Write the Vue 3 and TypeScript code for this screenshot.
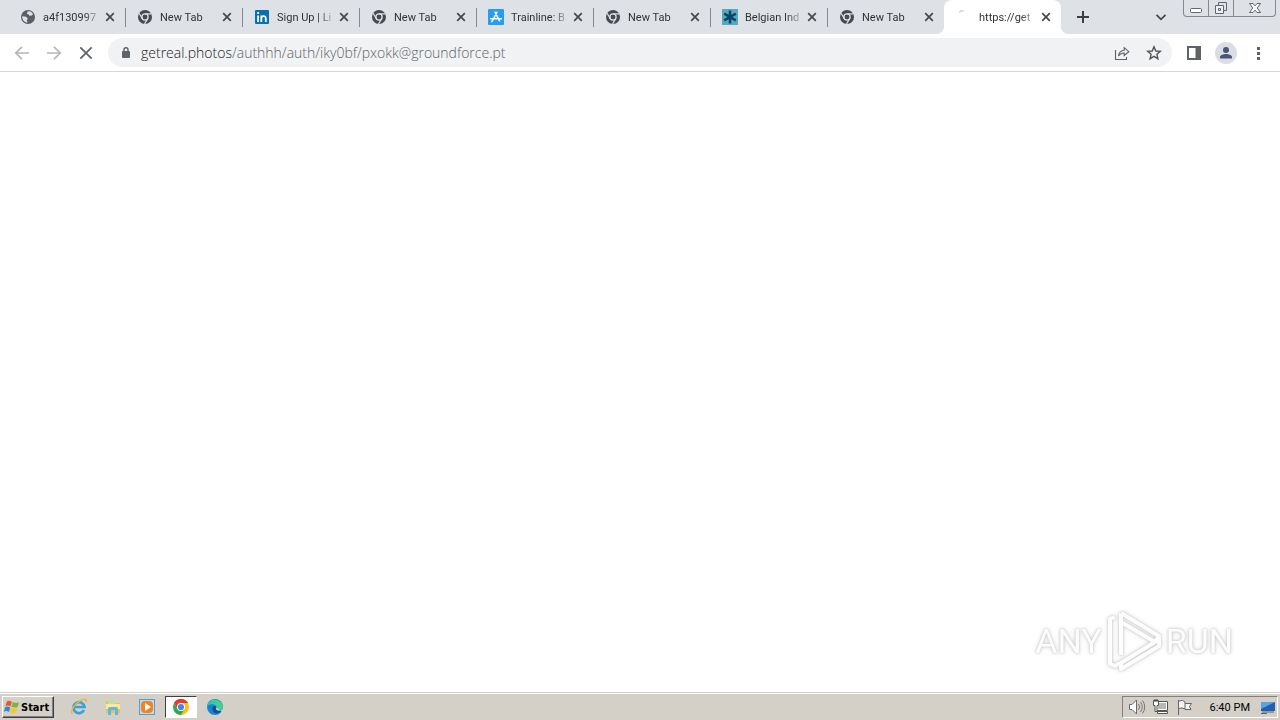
<script setup lang="ts">
import { ref } from 'vue'

interface Tab {
  title: string
  icon: 'globe' | 'chrome' | 'linkedin' | 'store' | 'asterisk' | 'loading'
}

const tabs: Tab[] = [
  { title: 'a4f130997', icon: 'globe' },
  { title: 'New Tab', icon: 'chrome' },
  { title: 'Sign Up | Li', icon: 'linkedin' },
  { title: 'New Tab', icon: 'chrome' },
  { title: 'Trainline: B', icon: 'store' },
  { title: 'New Tab', icon: 'chrome' },
  { title: 'Belgian Ind', icon: 'asterisk' },
  { title: 'New Tab', icon: 'chrome' },
  { title: 'https://get', icon: 'loading' },
]
const active = ref(8)
</script>

<template>
  <div class="screen">
    <header class="tabstrip">
      <nav class="tabs" aria-label="Tabs">
        <div v-for="(tab, i) in tabs" :key="i" class="tab" :class="{ active: i === active, divided: i < active - 1 }">
          <button class="tab-main" @click="active = i">
            <svg class="favicon" viewBox="0 0 16 16" aria-hidden="true">
              <template v-if="tab.icon === 'globe'">
                <circle cx="8" cy="8" r="7" fill="#5b5f65" />
                <path d="M2.2 7.2 6.2 7.8 7.8 9.6 6.8 11.2 7.6 13.6C4.4 13.3 2 11 2.2 7.2ZM7.8 2.2 10.6 2.4 13 4.8 12 6.6 9.4 6.8 8.4 5.2 6.8 4.8Z" fill="#dee1e6" />
              </template>
              <template v-else-if="tab.icon === 'chrome'">
                <circle cx="8" cy="8" r="7" fill="#474a50" />
                <circle cx="8" cy="8" r="3.1" fill="#474a50" stroke="#dee1e6" stroke-width="1.3" />
                <path d="M8 4.9H14.3M5.3 9.6 2.1 4.2M10.7 9.6 7.5 15" stroke="#dee1e6" stroke-width="1.2" />
              </template>
              <template v-else-if="tab.icon === 'linkedin'">
                <rect x="1" y="1" width="14" height="14" rx="1" fill="#0a70ae" />
                <path d="M4.1 6.4V13M7.3 6.4V13M7.4 9.4C7.4 6.6 11.8 6.3 11.8 9.4V13" fill="none" stroke="#fff" stroke-width="1.8" />
                <circle cx="4.1" cy="4" r="1.1" fill="#fff" />
              </template>
              <template v-else-if="tab.icon === 'store'">
                <rect width="16" height="16" rx="1" fill="#249df3" />
                <path d="M9 3.2 5 10.8M7 3.2 11.5 11.8M2.7 9.7H9M11 9.7H13.4M4.4 11.5 3.8 12.7" stroke="#fff" stroke-width="1.5" stroke-linecap="round" />
              </template>
              <template v-else-if="tab.icon === 'asterisk'">
                <rect width="16" height="16" fill="#58a9bd" />
                <path d="M8 1.6V14.4M2.2 4.7 13.8 11.3M2.2 11.3 13.8 4.7" stroke="#07476b" stroke-width="2.5" />
              </template>
              <path v-else d="M3 3.2Q5 1.5 7.5 1.8" fill="none" stroke="#c3cee3" stroke-width="1.3" />
            </svg>
            <span class="tab-title">{{ tab.title }}</span>
          </button>
          <button class="tab-close" aria-label="Close tab">
            <svg viewBox="0 0 16 16"><path d="M4.2 4.2 11.8 11.8M11.8 4.2 4.2 11.8" stroke="#45484d" stroke-width="1.7" /></svg>
          </button>
        </div>
      </nav>
      <button class="new-tab" aria-label="New tab">
        <svg viewBox="0 0 16 16"><path d="M8 2V14M2 8H14" stroke="#3c4043" stroke-width="2" /></svg>
      </button>
      <button class="tab-search" aria-label="Search tabs">
        <svg viewBox="0 0 16 16"><path d="M3.5 5.8 8 10.3 12.5 5.8" fill="none" stroke="#45484d" stroke-width="1.8" /></svg>
      </button>
      <div class="window-controls">
        <button aria-label="Minimize">
          <svg viewBox="0 0 14 14"><rect x="1.5" y="7.5" width="11" height="4" rx="1" fill="#fff" stroke="#63666c" /></svg>
        </button>
        <button aria-label="Restore">
          <svg viewBox="0 0 14 14"><path d="M4.5 1.5H12.5V9.5H10M4.5 1.5V4" fill="none" stroke="#63666c" /><path d="M1.5 4.5H9.5V12.5H1.5ZM4.5 7.5V9.5H6.5V7.5Z" fill="#eef0f3" fill-rule="evenodd" stroke="#63666c" /></svg>
        </button>
        <button class="close-window" aria-label="Close">
          <svg viewBox="0 0 14 14"><path d="M1.5 2.5H5L7 4.8 9 2.5H12.5L9.3 7 12.5 11.5H9L7 9.2 5 11.5H1.5L4.7 7Z" fill="#f5f6f7" stroke="#63666c" /></svg>
        </button>
      </div>
    </header>

    <div class="toolbar">
      <button class="tool" aria-label="Back">
        <svg viewBox="0 0 16 16"><path d="M15 8H2M8 1.8 1.8 8 8 14.2" fill="none" stroke="#b4b6b9" stroke-width="1.7" /></svg>
      </button>
      <button class="tool" aria-label="Forward">
        <svg viewBox="0 0 16 16"><path d="M1 8H14M8 1.8 14.2 8 8 14.2" fill="none" stroke="#b4b6b9" stroke-width="1.7" /></svg>
      </button>
      <button class="tool" aria-label="Stop loading">
        <svg viewBox="0 0 16 16"><path d="M2.3 2.3 13.7 13.7M13.7 2.3 2.3 13.7" stroke="#5f6368" stroke-width="1.8" /></svg>
      </button>
      <div class="omnibox">
        <svg class="lock" viewBox="0 0 12 14" aria-hidden="true"><rect x="2" y="5" width="8" height="7" rx="1" fill="#5f6368" /><path d="M4 5.5V3.8A2 2 0 0 1 8 3.8V5.5" fill="none" stroke="#5f6368" stroke-width="1.4" /></svg>
        <div class="address" role="textbox" aria-label="Address" contenteditable="true" spellcheck="false"><span class="host">getreal.photos</span>/authhh/auth/iky0bf/pxokk@groundforce.pt</div>
        <button class="tool" aria-label="Share">
          <svg viewBox="0 0 16 16"><path d="M1.5 5V14.5H12.5V12M4.5 11C5 7.5 7 5.5 10.2 5.3V2.7L14.8 6.7 10.2 10.5V8C7.5 8 6 8.8 4.5 11Z" fill="none" stroke="#5f6368" stroke-width="1.1" /></svg>
        </button>
        <button class="tool" aria-label="Bookmark">
          <svg viewBox="0 0 16 16"><path d="M8 1.8 9.8 6 14.3 6.4 10.9 9.3 11.9 13.7 8 11.4 4.1 13.7 5.1 9.3 1.7 6.4 6.2 6Z" fill="none" stroke="#505459" stroke-width="1.4" /></svg>
        </button>
      </div>
      <button class="tool" aria-label="Side panel">
        <svg viewBox="0 0 16 16"><rect x="2" y="2" width="12" height="12" fill="none" stroke="#5f6368" stroke-width="2" /><path d="M9.5 2H14V14H9.5Z" fill="#5f6368" /></svg>
      </button>
      <button class="tool profile" aria-label="Profile">
        <svg viewBox="0 0 22 22"><circle cx="11" cy="11" r="11" fill="#dadde3" /><circle cx="11" cy="8" r="3" fill="#4b5575" /><path d="M5 16.5V15.2C5 13 8.6 12.1 11 12.1S17 13 17 15.2V16.5Z" fill="#4b5575" /></svg>
      </button>
      <button class="tool" aria-label="Menu">
        <svg viewBox="0 0 16 16"><path d="M7 2H10V5H7ZM7 7H10V10H7ZM7 12H10V15H7Z" fill="#5f6368" /></svg>
      </button>
    </div>

    <main class="page">
      <div class="watermark">
        <span>ANY</span>
        <svg viewBox="0 0 58 64" aria-hidden="true">
          <path d="M10 8 5 10V55L10 57 15 54M16 4V46M16 4 54 27 50 33 16 13M50 33 16 54V60L54 37V27" fill="none" stroke-linejoin="round" stroke="#fdfdfd" stroke-width="4" />
        </svg>
        <span>RUN</span>
      </div>
    </main>

    <footer class="taskbar">
      <button class="start">
        <svg viewBox="0 0 16 16" aria-hidden="true">
          <path d="M2.8 2.6Q5.2 1 7.8 2.8L6.6 7.4Q4 5.8 1.4 7.2Z" fill="#e65a27" />
          <path d="M8.7 3.1Q11.5 4.6 15 3.3L13.6 8Q10.5 9.2 7.5 7.8Z" fill="#7ab43b" />
          <path d="M1.1 8.2Q3.7 6.8 6.3 8.4L5 13Q2.7 11.4 0 12.7Z" fill="#3586d4" />
          <path d="M7.2 8.8Q10.2 10.2 13.3 9L12 13.6Q9 14.8 5.9 13.3Z" fill="#f8c52a" />
        </svg>
        Start
      </button>
      <div class="launch">
        <button aria-label="Internet Explorer">
          <svg viewBox="0 0 18 18"><path d="M14 12A5.5 5.5 0 1 1 14.5 9H4" fill="none" stroke="#37a3dd" stroke-width="2.7" /><path d="M2.6 15.8C-.6 14 4 6 10 2.8 14 .5 17.5.5 16 4.2" fill="none" stroke="#edb632" stroke-width="1.4" /></svg>
        </button>
        <button aria-label="File Explorer">
          <svg viewBox="0 0 18 18"><path d="M2 3H7L8.5 5H16V15H2Z" fill="#e6c05b" /><path d="M4 2H11V6H4Z" fill="#b9e1a4" /><path d="M2 6H16V11H2Z" fill="#fae999" /><path d="M4 17V11Q4 9 6 9H12Q14 9 14 11V17H11V12H7V17Z" fill="#61b7dc" /></svg>
        </button>
        <button aria-label="Media Player">
          <svg viewBox="0 0 18 18"><rect x="1.5" y="1.5" width="15" height="15" fill="#b9dcf3" stroke="#5b9dcb" /><rect x="3" y="3" width="12" height="12" rx="4" fill="#f18420" /><path d="M7 5 13 9 7 13Z" fill="#fff" /></svg>
        </button>
        <button class="pressed" aria-label="Google Chrome">
          <svg viewBox="0 0 18 18"><path d="M9 9 2.1 5A8 8 0 0 1 15.9 5Z" fill="#e33b2e" /><path d="M9 9V5H15.9A8 8 0 0 1 9 17Z" fill="#fbc116" /><path d="M9 9 12.5 11 9 17A8 8 0 0 1 2.1 5L5.5 11Z" fill="#2da94f" /><path d="M9 5H15.9A8 8 0 0 0 2.1 5L5.5 11Z" fill="#e33b2e" /><circle cx="9" cy="9" r="4" fill="#fff" /><circle cx="9" cy="9" r="3.1" fill="#4285e8" /></svg>
        </button>
        <button aria-label="Microsoft Edge">
          <svg viewBox="0 0 18 18"><circle cx="9" cy="9" r="8" fill="#1684cf" /><path d="M1.3 7.5A8 8 0 0 1 17 9C17 13 11 13.5 10.4 11 12 8 8 4.5 1.3 7.5Z" fill="#42cf94" /><path d="M1 9C1 3.5 8 2 11.5 5.7 8 3.8 3 5 1 9Z" fill="#2ab6d5" /><path d="M6.5 9.5C7 7.6 9.5 7.6 10.3 9.3 9.3 12.2 12.4 13.6 16 12.2 11.8 17.5 5.5 15 6.5 9.5Z" fill="#124f99" /><path d="M10.4 9.2Q9.2 12 12.2 12.5 15.2 13 17 11V14.5L14.5 12.8Z" fill="#d4d0c8" /></svg>
        </button>
      </div>
      <div class="tray">
        <svg viewBox="0 0 18 18" role="img" aria-label="Volume"><path d="M1.5 6.5H4L8.5 2V16L4 11.5H1.5Z" fill="#fff" stroke="#6a6a6a" /><path d="M10.5 6Q12.5 9 10.5 12M12.5 4Q16 9 12.5 14M14.5 2.5Q19 9 14.5 15.5" fill="none" stroke="#777" /></svg>
        <svg viewBox="0 0 18 18" role="img" aria-label="Network"><path d="M4.5 3.5H15.5V12.5H4.5Z" fill="#fff" stroke="#555" /><path d="M6 5H14V11H6Z" fill="#b8b8b5" /><path d="M5.5 15.5H15.5V13.5H5.5Z" fill="#fff" stroke="#555" /><path d="M1.5 2.5H6.5V7.5H5V13.5H3V7.5H1.5Z" fill="#fff" stroke="#555" /><path d="M3 1V4M5 1V4" fill="none" stroke="#444" /></svg>
        <svg viewBox="0 0 18 18" role="img" aria-label="Action Center"><path d="M2.5 2V17M3 3Q7 1.5 9 4V11Q6 9 3 10.5M9 5.5H15.5L13.5 8.5 15 11.5H9" fill="#f4f4f2" stroke="#666" /></svg>
        <time>6:40 PM</time>
        <button aria-label="Show desktop"><svg viewBox="0 0 16 16"><path d="M1 3H15V12H1Z" fill="#245fae" /><path d="M1 3H15L1 10Z" fill="#5aa3e2" /><path d="M2 13H14M1 14.5H7" stroke="#52616f" stroke-width="1" /></svg></button>
      </div>
    </footer>
  </div>
</template>

<style>
html, body { margin: 0; }
</style>

<style scoped>
.screen {
  display: flex;
  flex-direction: column;
  min-height: 100vh;
  background: #fff;
  color: #303338;
  font-family: Roboto, "Noto Sans", sans-serif;
  font-size: 11px;
}
button {
  margin: 0;
  padding: 0;
  border: 0;
  background: none;
  color: inherit;
  font: inherit;
  text-align: left;
}
svg { display: block; flex: none; }
.tabstrip { display: flex; height: 34px; padding: 0 4px 0 8px; background: #dee1e6; }
.tabs { display: flex; flex: 0 1 1053px; min-width: 0; }
.tab { position: relative; display: flex; flex: 1 1 0; min-width: 0; align-items: center; padding: 0 7px 0 12px; box-sizing: border-box; }
.tab.divided::after { content: ""; position: absolute; right: -1px; top: 8px; width: 1px; height: 19px; background: #85888e; }
.tab-main { display: flex; flex: 1; min-width: 0; align-items: center; gap: 7px; }
.favicon { width: 16px; height: 16px; }
.tab-title {
  flex: 1;
  min-width: 0;
  overflow: hidden;
  white-space: nowrap;
  line-height: 21px;
  mask-image: linear-gradient(to right, #000 72%, transparent 105%);
}
.tab-close { margin-left: 2px; }
.tab-close svg { width: 16px; height: 16px; }
.active { border-radius: 8px 8px 0 0; background: #fff; }
.active::before, .active::after { content: ""; position: absolute; bottom: 0; width: 8px; height: 8px; }
.active::before { left: -8px; background: radial-gradient(circle at 0 0, transparent 8px, #fff 8px); }
.active::after { right: -8px; background: radial-gradient(circle at 100% 0, transparent 8px, #fff 8px); }
.new-tab { padding: 0 14px; }
.new-tab svg { width: 16px; height: 16px; }
.tab-search { margin-left: auto; padding: 0 14px; }
.tab-search svg { width: 16px; height: 16px; }
.window-controls { display: flex; height: 16px; border: 1px solid #85888e; border-top: 0; border-radius: 0 0 4px 4px; overflow: hidden; }
.window-controls button { display: flex; justify-content: center; align-items: center; width: 25px; box-sizing: border-box; border-right: 1px solid #85888e; }
.window-controls .close-window { width: 41px; border-right: 0; }
.window-controls svg { width: 14px; height: 14px; }

.toolbar { display: flex; align-items: center; height: 37px; padding: 0 6px; border-bottom: 1px solid #d5d7da; }
.tool { display: flex; flex: none; align-items: center; justify-content: center; width: 32px; height: 28px; }
.tool svg { width: 16px; height: 16px; }
.profile svg { width: 22px; height: 22px; }
.omnibox { display: flex; flex: 1; min-width: 0; align-items: center; height: 29px; margin: 0 6px; padding: 0 2px 0 12px; border-radius: 15px; background: #f0f2f4; }
.lock { width: 12px; height: 14px; }
.address { flex: 1; min-width: 0; padding-left: 9px; overflow: hidden; white-space: nowrap; outline: 0; color: #5f6368; font-family: "Open Sans", "Noto Sans", sans-serif; font-size: 14px; font-weight: 300; line-height: 24px; }
.host { color: #202124; }

.page { display: flex; flex: 1; align-items: flex-end; justify-content: flex-end; padding: 0 47px 20px; }
.watermark { display: flex; align-items: center; gap: 3px; color: #fdfdfd; font-family: Roboto, sans-serif; font-size: 34px; line-height: 60px; filter: drop-shadow(0 0 1px #c4c4c4) drop-shadow(0 0 2px #dedede); }
.watermark svg { width: 58px; height: 64px; }

.taskbar { display: flex; align-items: center; height: 26px; padding: 0 2px; border-top: 1px solid #fff; background: #d4d0c8; box-shadow: 0 -1px #d4d0c8; color: #000; }
.start { display: flex; align-items: center; gap: 1px; width: 52px; height: 22px; padding-left: 1px; box-sizing: border-box; border: 1px solid; border-color: #fff #404040 #404040 #fff; box-shadow: inset -1px -1px #808080; font-family: "DejaVu Sans Condensed", "DejaVu Sans", sans-serif; font-size: 11px; font-weight: 700; }
.start svg { width: 16px; height: 16px; }
.launch { display: flex; gap: 2px; margin-left: 9px; }
.launch button { display: flex; align-items: center; justify-content: center; width: 32px; height: 22px; box-sizing: border-box; }
.launch svg { width: 18px; height: 18px; }
.launch .pressed { border: 1px solid; border-color: #404040 #fff #fff #404040; background: #fff; }
.tray { display: flex; align-items: center; gap: 6px; height: 22px; margin-left: auto; padding: 0 1px 0 5px; box-sizing: border-box; border: 1px solid; border-color: #808080 #fff #fff #808080; }
.tray svg { width: 18px; height: 18px; }
.tray time { margin: 0 4px 0 10px; color: #000; font-size: 11px; }
.tray button svg { width: 16px; height: 16px; }
</style>
